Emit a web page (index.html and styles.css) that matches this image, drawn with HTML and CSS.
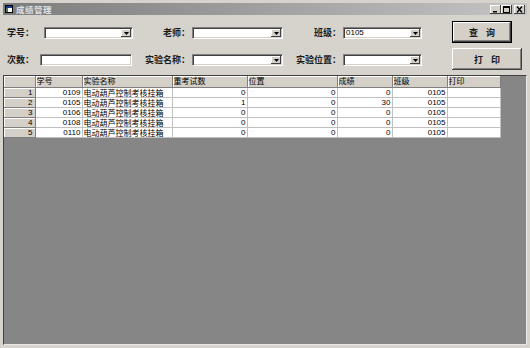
FILE: index.html
```html
<!DOCTYPE html>
<html lang="zh-CN">
<head>
<meta charset="utf-8">
<title>成绩管理</title>
<link rel="stylesheet" href="styles.css">
</head>
<body>
<div class="window">
  <div class="titlebar">
    <span class="ticon"><svg width="8" height="8" viewBox="0 0 8 8"><rect x="0.5" y="0.5" width="7" height="7" fill="#fff" stroke="#000"/><rect x="1" y="1" width="6" height="2" fill="#1a3a8a"/><rect x="1" y="3" width="2" height="4" fill="#4a7a4a"/></svg></span>
    <span class="ttext">成绩管理</span>
    <div class="tbtns">
      <span class="tbtn"><svg width="9" height="7" viewBox="0 0 9 7"><rect x="2" y="5" width="4" height="1.5" fill="#000"/></svg></span>
      <span class="tbtn"><svg width="9" height="7" viewBox="0 0 9 7"><rect x="1.5" y="0.5" width="6" height="6" fill="none" stroke="#000"/><rect x="1.5" y="0.5" width="6" height="1.5" fill="#000"/></svg></span>
      <span class="tbtn close"><svg width="9" height="7" viewBox="0 0 9 7"><path d="M2 0.5 L7 6.5 M7 0.5 L2 6.5" stroke="#000" stroke-width="1.4"/></svg></span>
    </div>
  </div>
  <div class="form">
    <div class="fields">
      <div class="row">
        <label class="lbl w41 left">学号：</label>
        <div class="combo w89"><span class="val"></span><span class="drop"><svg width="5" height="3" viewBox="0 0 5 3"><path d="M0 0 H5 L2.5 3 Z" fill="#000"/></svg></span></div>
        <label class="lbl w59">老师：</label>
        <div class="combo w91"><span class="val"></span><span class="drop"><svg width="5" height="3" viewBox="0 0 5 3"><path d="M0 0 H5 L2.5 3 Z" fill="#000"/></svg></span></div>
        <label class="lbl w60">班级：</label>
        <div class="combo w79"><span class="val">0105</span><span class="drop"><svg width="5" height="3" viewBox="0 0 5 3"><path d="M0 0 H5 L2.5 3 Z" fill="#000"/></svg></span></div>
      </div>
      <div class="row">
        <label class="lbl w37 left">次数：</label>
        <div class="textbox w92"></div>
        <label class="lbl w60">实验名称：</label>
        <div class="combo w91"><span class="val"></span><span class="drop"><svg width="5" height="3" viewBox="0 0 5 3"><path d="M0 0 H5 L2.5 3 Z" fill="#000"/></svg></span></div>
        <label class="lbl w60">实验位置：</label>
        <div class="combo w79"><span class="val"></span><span class="drop"><svg width="5" height="3" viewBox="0 0 5 3"><path d="M0 0 H5 L2.5 3 Z" fill="#000"/></svg></span></div>
      </div>
    </div>
    <div class="buttons">
      <button class="btn default">查 询</button>
      <button class="btn wide">打 印</button>
    </div>
  </div>
  <div class="gridbox">
    <table class="grid">
      <colgroup>
        <col class="c0"><col class="c1"><col class="c2"><col class="c3"><col class="c4"><col class="c5"><col class="c6"><col class="c7">
      </colgroup>
      <thead>
        <tr><th class="corner"></th><th>学号</th><th>实验名称</th><th>重考试数</th><th>位置</th><th>成绩</th><th>班级</th><th>打印</th></tr>
      </thead>
      <tbody>
        <tr><th class="rh">1</th><td class="num">0109</td><td>电动葫芦控制考核挂箱</td><td class="num">0</td><td class="num">0</td><td class="num">0</td><td class="num">0105</td><td></td></tr>
        <tr><th class="rh">2</th><td class="num">0105</td><td>电动葫芦控制考核挂箱</td><td class="num">1</td><td class="num">0</td><td class="num">30</td><td class="num">0105</td><td></td></tr>
        <tr><th class="rh">3</th><td class="num">0106</td><td>电动葫芦控制考核挂箱</td><td class="num">0</td><td class="num">0</td><td class="num">0</td><td class="num">0105</td><td></td></tr>
        <tr><th class="rh">4</th><td class="num">0108</td><td>电动葫芦控制考核挂箱</td><td class="num">0</td><td class="num">0</td><td class="num">0</td><td class="num">0105</td><td></td></tr>
        <tr><th class="rh">5</th><td class="num">0110</td><td>电动葫芦控制考核挂箱</td><td class="num">0</td><td class="num">0</td><td class="num">0</td><td class="num">0105</td><td></td></tr>
      </tbody>
    </table>
  </div>
</div>
</body>
</html>
```
FILE: styles.css
```css
* { box-sizing: border-box; }
html, body { margin: 0; padding: 0; }
body {
  width: 530px;
  height: 348px;
  overflow: hidden;
  font-family: "Noto Sans CJK SC", "Liberation Sans", sans-serif;
  font-size: 9px;
  color: #000;
  background: #d4d0c8;
}
.window {
  width: 530px;
  height: 348px;
  padding: 3px;
  background: #d6d3cc;
  display: flex;
  flex-direction: column;
}
.titlebar {
  height: 12px;
  flex: none;
  display: flex;
  align-items: center;
  background: linear-gradient(to right, #7c7c7c, #c4c4c4);
  padding-left: 1px;
  padding-right: 2px;
}
.ticon { width: 9px; height: 9px; display: flex; align-items: center; justify-content: center; }
.ttext {
  margin-left: 3px;
  color: #e0e0e0;
  font-weight: bold;
  font-size: 8.5px;
  line-height: 10px;
  letter-spacing: 0.5px;
}
.tbtns { margin-left: auto; display: flex; gap: 0; }
.tbtn {
  width: 11px;
  height: 9px;
  background: #d4d0c8;
  box-shadow: inset -1px -1px #404040, inset 1px 1px #fff;
  display: flex;
  align-items: center;
  justify-content: center;
}
.tbtn.close { margin-left: 2px; }

.form {
  height: 60px;
  flex: none;
  display: flex;
}
.fields {
  padding-top: 12px;
  display: flex;
  flex-direction: column;
  gap: 15px;
}
.row { display: flex; height: 12px; align-items: center; }
.lbl {
  flex: none;
  text-align: right;
  padding-right: 2px;
  line-height: 12px;
  white-space: nowrap;
  font-size: 9px;
  font-weight: bold;
  color: #1a1a1a;
}
.lbl.left { text-align: left; padding-left: 4px; padding-right: 0; }
.w37 { width: 37px; }
.w41 { width: 41px; }
.w59 { width: 59px; }
.w60 { width: 60px; }
.w79 { width: 79px; }
.w89 { width: 89px; }
.w91 { width: 91px; }
.w92 { width: 92px; }

.combo, .textbox {
  flex: none;
  height: 12px;
  background: #fff;
  border-top: 1px solid #808080;
  border-left: 1px solid #808080;
  border-right: 1px solid #fff;
  border-bottom: 1px solid #fff;
  box-shadow: inset 1px 1px #404040, inset -1px -1px #d4d0c8;
  display: flex;
  align-items: stretch;
}
.combo .val {
  flex: 1;
  font-family: "Liberation Sans", sans-serif;
  font-size: 8px;
  line-height: 10px;
  padding-left: 2px;
}
.combo .drop {
  width: 10px;
  margin: 1px 1px 1px 0;
  background: #d4d0c8;
  box-shadow: inset -1px -1px #404040, inset 1px 1px #fff;
  display: flex;
  align-items: center;
  justify-content: center;
}

.buttons {
  margin-left: 30px;
  padding-top: 6px;
  display: flex;
  flex-direction: column;
  gap: 5px;
}
.btn {
  height: 22px;
  width: 60px;
  padding: 0;
  margin: 0;
  font-family: "Noto Sans CJK SC", sans-serif;
  font-size: 9px;
  font-weight: bold;
  letter-spacing: 3px;
  text-indent: 3px;
  background: #d4d0c8;
  border: none;
  box-shadow: inset -1px -1px #404040, inset 1px 1px #fff, inset -2px -2px #808080;
  color: #1a1a1a;
}
.btn.default {
  border: 1px solid #000;
  box-shadow: inset -1px -1px #404040, inset 1px 1px #fff, inset -2px -2px #808080;
}
.btn.wide { width: 70px; }

.gridbox {
  flex: 1;
  background: #868686;
  border-top: 1px solid #404040;
  border-left: 1px solid #404040;
  border-right: 1px solid #e8e8e8;
  border-bottom: 1px solid #e8e8e8;
  overflow: hidden;
}
.grid {
  border-collapse: collapse;
  table-layout: fixed;
  width: 496px;
  font-size: 8px;
}
.c0 { width: 31px; }
.c1 { width: 47px; }
.c2 { width: 90px; }
.c3 { width: 75px; }
.c4 { width: 90px; }
.c5 { width: 55px; }
.c6 { width: 55px; }
.c7 { width: 53px; }
.grid th, .grid td {
  padding: 0 1px;
  white-space: nowrap;
  overflow: hidden;
  font-weight: normal;
}
.grid thead th {
  height: 11px;
  line-height: 10px;
  text-align: left;
  background: #d4d0c8;
  border-right: 1px solid #808080;
  border-bottom: 1px solid #808080;
  box-shadow: inset 1px 1px #fff;
}
.grid tbody tr { height: 10px; }
.grid td {
  height: 10px;
  line-height: 9px;
  background: #fff;
  border-right: 1px solid #c0c0c0;
  border-bottom: 1px solid #c0c0c0;
}
.grid th.rh {
  height: 10px;
  line-height: 9px;
  text-align: right;
  padding-right: 2px;
  font-family: "Liberation Sans", sans-serif;
  background: #d4d0c8;
  border-right: 1px solid #808080;
  border-bottom: 1px solid #808080;
  box-shadow: inset 1px 1px #fff;
}
.grid td.num {
  text-align: right;
  font-family: "Liberation Sans", sans-serif;
}
```
